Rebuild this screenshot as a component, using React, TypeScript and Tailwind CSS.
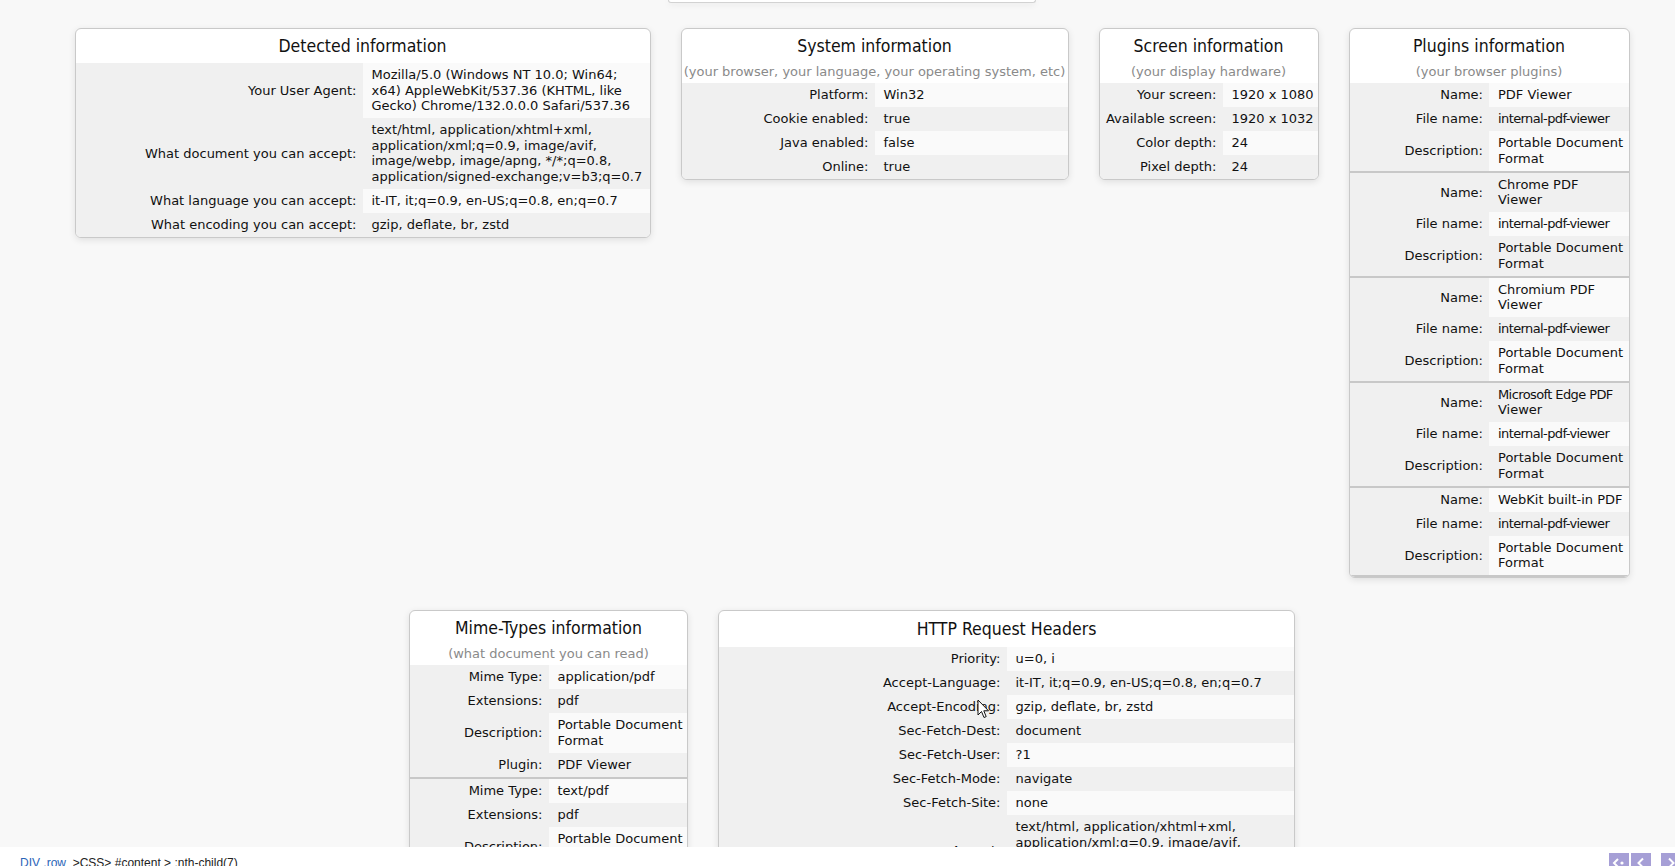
import React from "react";

type Row = { label: string; value: string | string[] };

const font = "font-['DejaVu_Sans','Liberation_Sans',sans-serif]";
const titleFont = "font-['DejaVu_Sans_Condensed','DejaVu_Sans',sans-serif]";

// a few strings are narrower in the reference face than in DejaVu Sans
const tight: Record<string, string> = {
  "internal-pdf-viewer": "tracking-[-0.6px]",
  "Microsoft Edge PDF": "tracking-[-0.6px]",
};

const detected: Row[] = [
  {
    label: "Your User Agent",
    value: [
      "Mozilla/5.0 (Windows NT 10.0; Win64;",
      "x64) AppleWebKit/537.36 (KHTML, like",
      "Gecko) Chrome/132.0.0.0 Safari/537.36",
    ],
  },
  {
    label: "What document you can accept",
    value: [
      "text/html, application/xhtml+xml,",
      "application/xml;q=0.9, image/avif,",
      "image/webp, image/apng, */*;q=0.8,",
      "application/signed-exchange;v=b3;q=0.7",
    ],
  },
  { label: "What language you can accept", value: "it-IT, it;q=0.9, en-US;q=0.8, en;q=0.7" },
  { label: "What encoding you can accept", value: "gzip, deflate, br, zstd" },
];

const system: Row[] = [
  { label: "Platform", value: "Win32" },
  { label: "Cookie enabled", value: "true" },
  { label: "Java enabled", value: "false" },
  { label: "Online", value: "true" },
];

const screenRows: Row[] = [
  { label: "Your screen", value: "1920 x 1080" },
  { label: "Available screen", value: "1920 x 1032" },
  { label: "Color depth", value: "24" },
  { label: "Pixel depth", value: "24" },
];

const pdfDesc = ["Portable Document", "Format"];

const plugins: Row[][] = [
  "PDF Viewer",
  ["Chrome PDF", "Viewer"],
  ["Chromium PDF", "Viewer"],
  ["Microsoft Edge PDF", "Viewer"],
  "WebKit built-in PDF",
].map((name) => [
  { label: "Name", value: name },
  { label: "File name", value: "internal-pdf-viewer" },
  { label: "Description", value: pdfDesc },
]);

const mimes: Row[][] = ["application/pdf", "text/pdf"].map((type) => [
  { label: "Mime Type", value: type },
  { label: "Extensions", value: "pdf" },
  { label: "Description", value: pdfDesc },
  { label: "Plugin", value: "PDF Viewer" },
]);

const headers: Row[] = [
  { label: "Priority", value: "u=0, i" },
  { label: "Accept-Language", value: "it-IT, it;q=0.9, en-US;q=0.8, en;q=0.7" },
  { label: "Accept-Encoding", value: "gzip, deflate, br, zstd" },
  { label: "Sec-Fetch-Dest", value: "document" },
  { label: "Sec-Fetch-User", value: "?1" },
  { label: "Sec-Fetch-Mode", value: "navigate" },
  { label: "Sec-Fetch-Site", value: "none" },
  {
    label: "Accept",
    value: [
      "text/html, application/xhtml+xml,",
      "application/xml;q=0.9, image/avif,",
      "image/webp, image/apng, */*;q=0.8,",
      "application/signed-exchange;v=b3;q=0.7",
    ],
  },
  { label: "Upgrade-Insecure-Requests", value: "1" },
  { label: "Connection", value: "keep-alive" },
];

function Cells({ row, alt }: { row: Row; alt: boolean }) {
  const lines = Array.isArray(row.value) ? row.value : [row.value];
  return (
    <>
      <div className="flex items-center justify-end bg-[#f0f0f0] py-[4.25px] pr-[6px] text-right whitespace-nowrap">
        {row.label}:
      </div>
      <div className={`flex flex-col justify-center py-[4.25px] pl-[9px] pr-[3px] ${alt ? "bg-[#f0f0f0]" : "bg-[#fafafa]"}`}>
        {lines.map((l) => (
          <span key={l} className={`whitespace-nowrap ${tight[l] ?? ""}`}>
            {l}
          </span>
        ))}
      </div>
    </>
  );
}

function Card({
  title,
  subtitle,
  groups,
  width,
  cols = "grid-cols-2",
  divided = false,
  head = "h-[34px]",
}: {
  title: string;
  subtitle?: string;
  groups: Row[][];
  width: string;
  cols?: string;
  divided?: boolean;
  head?: string;
}) {
  let i = 0;
  return (
    <div className={`${width} shrink-0 overflow-hidden rounded-[6px] border border-[#c9c9c9] bg-white shadow-[0_2px_7px_rgba(0,0,0,0.1)]`}>
      <div className={`${titleFont} ${head} flex items-center justify-center pt-[1px] text-[17.5px] text-[#111]`}>{title}</div>
      {subtitle && <div className="h-[20px] text-center leading-[18px] text-[#8a8a8a]">{subtitle}</div>}
      {groups.map((g, gi) => (
        <div key={gi} className={divided ? "border-b-2 border-[#c8c8c8]" : gi > 0 ? "border-t-2 border-[#c8c8c8]" : ""}>
          <div className={`grid ${cols}`}>
            {g.map((r) => {
              const alt = i++ % 2 === 1;
              return <Cells key={r.label} row={r} alt={alt} />;
            })}
          </div>
        </div>
      ))}
    </div>
  );
}

function Cursor() {
  return (
    <svg className="fixed left-[977px] top-[699px]" width="13" height="20" viewBox="0 0 13 20">
      <path d="M1 1 L1 16 L4.5 12.5 L7 18.5 L9.2 17.6 L6.8 11.8 L11.5 11.8 Z" fill="#fff" stroke="#111" strokeWidth="1" strokeLinejoin="round" />
    </svg>
  );
}

function BottomBar() {
  return (
    <div className="fixed bottom-0 left-0 right-0 flex h-[19px] items-start overflow-hidden bg-white font-['Liberation_Sans',sans-serif] text-[12px] leading-[14px]">
      <div className="pl-[20px] pt-[9px]">
        <span className="text-[#2a64b8]">DIV .row</span>
        <span className="text-[#222]">&nbsp; &gt;CSS&gt; #content &gt; :nth-child(7)</span>
      </div>
      <div className="-mr-[6px] ml-auto flex gap-[2px] pt-[6px]">
        <div className="flex h-[20px] w-[20px] items-center justify-center bg-[#a69fd6]">
          <svg width="14" height="12" viewBox="0 0 14 12">
            <path d="M6 2 L2 6 L6 10" stroke="#fff" strokeWidth="2" fill="none" />
            <circle cx="10" cy="6" r="1.6" fill="#fff" />
          </svg>
        </div>
        <div className="flex h-[20px] w-[20px] items-center justify-center bg-[#a69fd6]">
          <svg width="12" height="12" viewBox="0 0 12 12">
            <path d="M8 1.5 L3.5 6 L8 10.5" stroke="#fff" strokeWidth="2" fill="none" />
          </svg>
        </div>
        <div className="ml-[8px] flex h-[20px] w-[20px] items-center justify-center bg-[#a69fd6]">
          <svg width="12" height="12" viewBox="0 0 12 12">
            <path d="M4 1.5 L8.5 6 L4 10.5" stroke="#fff" strokeWidth="2" fill="none" />
          </svg>
        </div>
      </div>
    </div>
  );
}

export default function App() {
  return (
    <div className={`${font} h-screen overflow-hidden bg-[#f8f8f8] pl-[29px] text-[13px] leading-[15.5px] text-[#111]`}>
      <div className="flex justify-center">
        <div className="h-[3px] w-[368px] rounded-b-[6px] border-x border-b border-[#d2d2d2] bg-white shadow-[0_2px_6px_rgba(0,0,0,0.08)]" />
      </div>
      <div className="mt-[25px] flex items-start justify-center gap-[30px]">
        <Card title="Detected information" groups={[detected]} width="w-[576px]" />
        <Card
          title="System information"
          subtitle="(your browser, your language, your operating system, etc)"
          groups={[system]}
          width="w-[388px]"
        />
        <Card
          title="Screen information"
          subtitle="(your display hardware)"
          groups={[screenRows]}
          width="w-[220px]"
          cols="grid-cols-[123px_1fr]"
        />
        <Card title="Plugins information" subtitle="(your browser plugins)" groups={plugins} width="w-[281px]" divided />
      </div>
      <div className="mt-[32px] flex items-start justify-center gap-[30px]">
        <Card title="Mime-Types information" subtitle="(what document you can read)" groups={mimes} width="w-[279px]" divided />
        <Card title="HTTP Request Headers" groups={[headers]} width="w-[577px]" head="h-[36px]" />
      </div>
      <Cursor />
      <BottomBar />
    </div>
  );
}
